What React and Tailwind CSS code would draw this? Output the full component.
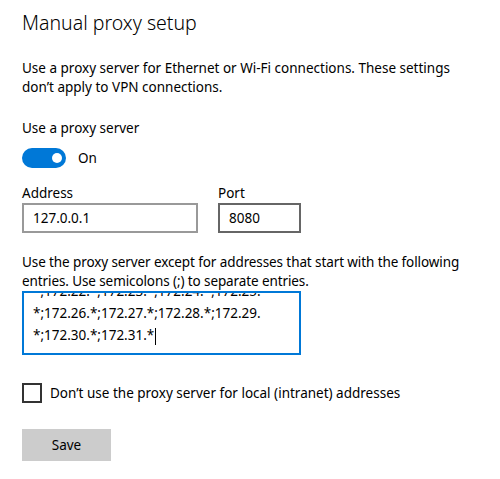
import { useState } from "react";

const BYPASS_LINES = [
  "*;172.22.*;172.23.*;172.24.*;172.25.",
  "*;172.26.*;172.27.*;172.28.*;172.29.",
  "*;172.30.*;172.31.*",
];

function Toggle({ on, onChange }) {
  return (
    <button
      type="button"
      onClick={() => onChange(!on)}
      className={`flex h-5 w-11 items-center rounded-full px-[4px] ${
        on ? "justify-end bg-[#0078d7]" : "justify-start border-2 border-[#333] bg-white"
      }`}
    >
      <span className={`block h-[10px] w-[10px] rounded-full ${on ? "bg-white" : "bg-[#333]"}`} />
    </button>
  );
}

function Field({ label, value, width, dark }) {
  return (
    <div className="flex flex-col">
      <span className="h-[20px] leading-[20px]">{label}</span>
      <div
        className={`flex h-[30px] items-center border-2 px-[9px] ${width} ${
          dark ? "border-[#666]" : "border-[#999]"
        }`}
      >
        {value}
      </div>
    </div>
  );
}

export default function App() {
  const [on, setOn] = useState(true);
  const [local, setLocal] = useState(false);

  return (
    <div className="h-[479px] w-[500px] overflow-hidden bg-white px-[22px] text-[13.5px] text-black font-['Noto_Sans',sans-serif]">
      <h1 className="pt-[8px] text-[19.5px] font-light leading-[30px]">Manual proxy setup</h1>

      <p className="mt-[21px] whitespace-nowrap leading-[19px]">
        Use a proxy server for Ethernet or Wi-Fi connections. These settings
        <br />
        don’t apply to VPN connections.
      </p>

      <div className="mt-[21px] leading-[20px]">Use a proxy server</div>
      <div className="mt-[10px] flex items-center gap-3">
        <Toggle on={on} onChange={setOn} />
        <span>{on ? "On" : "Off"}</span>
      </div>

      <div className="mt-[15px] flex gap-[20px]">
        <Field label="Address" value="127.0.0.1" width="w-[176px]" />
        <Field label="Port" value="8080" width="w-[83px]" dark />
      </div>

      <p className="mt-[20px] whitespace-nowrap leading-[19px] tracking-[-0.1px]">
        Use the proxy server except for addresses that start with the following
        <br />
        entries. Use semicolons (;) to separate entries.
      </p>

      {/* scrolled textbox: first line is mostly hidden above the top edge */}
      <div className="h-[64px] w-[279px] overflow-hidden border-2 border-[#0078d7] px-[9px]">
        <div className="-mt-[13px] leading-[22px]">
          {BYPASS_LINES.map((line, i) => (
            <div key={i} className="whitespace-nowrap">
              {line}
              {i === BYPASS_LINES.length - 1 && (
                <span className="ml-[1px] inline-block h-[17px] w-[1px] bg-black align-middle" />
              )}
            </div>
          ))}
        </div>
      </div>

      <label className="mt-[28px] flex cursor-pointer items-center gap-[8px]">
        <span
          onClick={() => setLocal(!local)}
          className={`block h-5 w-5 shrink-0 border-2 ${local ? "border-[#0078d7] bg-[#0078d7]" : "border-[#333]"}`}
        />
        <span>Don’t use the proxy server for local (intranet) addresses</span>
      </label>

      <button type="button" className="mt-[25px] block h-[32px] w-[89px] bg-[#cccccc] leading-[32px]">
        Save
      </button>
    </div>
  );
}
